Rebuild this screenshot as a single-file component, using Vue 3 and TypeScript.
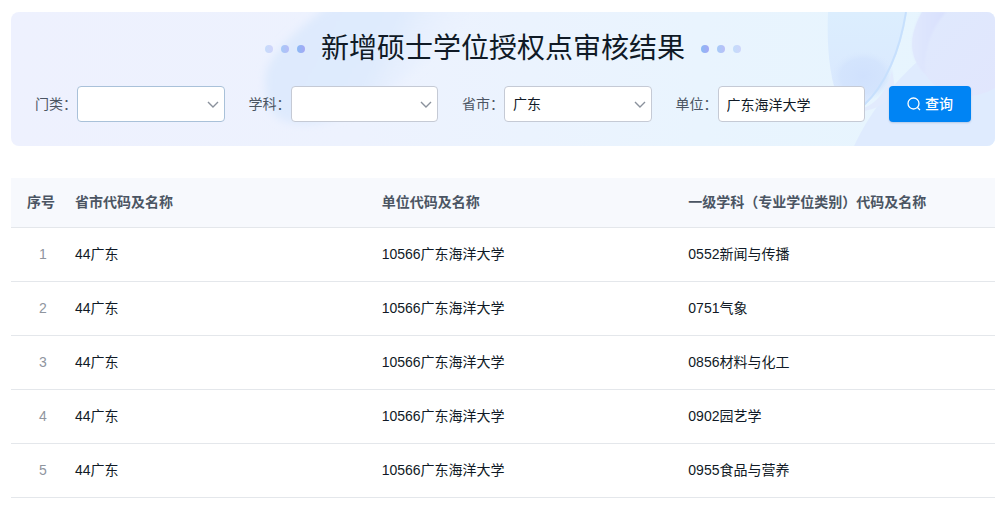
<script setup lang="ts">
import { ref } from 'vue'

interface ResultRow {
  region: string
  school: string
  subject: string
}

const category = ref('')
const discipline = ref('')
const province = ref('广东')
const school = ref('广东海洋大学')

const rows: ResultRow[] = [
  { region: '44广东', school: '10566广东海洋大学', subject: '0552新闻与传播' },
  { region: '44广东', school: '10566广东海洋大学', subject: '0751气象' },
  { region: '44广东', school: '10566广东海洋大学', subject: '0856材料与化工' },
  { region: '44广东', school: '10566广东海洋大学', subject: '0902园艺学' },
  { region: '44广东', school: '10566广东海洋大学', subject: '0955食品与营养' },
]
</script>

<template>
  <main class="page">
    <section class="panel">
      <svg class="backdrop" viewBox="0 0 984 134" preserveAspectRatio="none" aria-hidden="true">
        <defs>
          <linearGradient id="base" x1="0" y1="0" x2="1" y2="0">
            <stop offset="0" stop-color="#eef1fe" />
            <stop offset="0.35" stop-color="#edf2fe" />
            <stop offset="0.7" stop-color="#e9f4fe" />
            <stop offset="1" stop-color="#e6f5fe" />
          </linearGradient>
          <linearGradient id="glow" gradientUnits="userSpaceOnUse" x1="290" y1="30" x2="420" y2="100">
            <stop offset="0" stop-color="#deeafd" />
            <stop offset="0.5" stop-color="#dfebfd" />
            <stop offset="1" stop-color="#ecf2fe" stop-opacity="0" />
          </linearGradient>
          <linearGradient id="petal" x1="0" y1="0" x2="0" y2="1">
            <stop offset="0" stop-color="#dceefe" />
            <stop offset="1" stop-color="#d9e7fe" />
          </linearGradient>
          <linearGradient id="orb" x1="0" y1="0" x2="1" y2="1">
            <stop offset="0" stop-color="#dfe9fd" />
            <stop offset="1" stop-color="#e1e6fd" />
          </linearGradient>
          <linearGradient id="rim" x1="0" y1="0" x2="1" y2="0">
            <stop offset="0" stop-color="#e0e8fd" />
            <stop offset="1" stop-color="#d8dffd" />
          </linearGradient>
          <radialGradient id="spot">
            <stop offset="0" stop-color="#d0e1fd" />
            <stop offset="0.7" stop-color="#d2e3fd" stop-opacity="0.8" />
            <stop offset="1" stop-color="#d8e8fd" stop-opacity="0" />
          </radialGradient>
          <filter id="soft"><feGaussianBlur stdDeviation="4" /></filter>
          <filter id="edge"><feGaussianBlur stdDeviation="1" /></filter>
        </defs>
        <rect width="984" height="134" fill="url(#base)" />
        <path d="M325 -12 C290 14 254 44 254 66 C254 100 262 112 296 112 C352 108 420 50 480 -12Z" fill="url(#glow)" filter="url(#soft)" />
        <path d="M843 134 C861 96 884 70 906 50 L984 40 V134Z" fill="#dfebfe" />
        <path d="M817 0 H896 C890 38 876 74 853 94 C836 104 828 88 823 74 C817 52 816 24 817 0Z" fill="url(#petal)" />
        <ellipse cx="852" cy="64" rx="32" ry="25" fill="url(#spot)" />
        <path d="M895 0 C889 38 875 73 852 94" fill="none" stroke="#c7e0fd" stroke-width="2" />
        <path d="M853 96 C868 90 878 74 881 58 L884 76 C876 92 866 97 853 99Z" fill="#e2ebfd" />
        <path d="M911 0 C898 24 897 44 914 62 C932 90 964 88 984 76 V0Z" fill="url(#orb)" />
        <path d="M911 0 C898 24 897 44 914 62 C912 38 922 14 935 0Z" fill="url(#rim)" filter="url(#edge)" />
      </svg>

      <div class="heading">
        <span class="dots" aria-hidden="true"><i class="faint"></i><i class="mid"></i><i class="strong"></i></span>
        <h1>新增硕士学位授权点审核结果</h1>
        <span class="dots" aria-hidden="true"><i class="strong"></i><i class="mid"></i><i class="faint"></i></span>
      </div>

      <form class="filters" @submit.prevent>
        <div class="field">
          <label for="category">门类：</label>
          <div class="picker">
            <select id="category" v-model="category" class="control active">
              <option value=""></option>
            </select>
            <svg class="arrow" viewBox="0 0 12 8" aria-hidden="true"><path d="M1 1 L6 6 L11 1" /></svg>
          </div>
        </div>
        <div class="field">
          <label for="discipline">学科：</label>
          <div class="picker">
            <select id="discipline" v-model="discipline" class="control">
              <option value=""></option>
            </select>
            <svg class="arrow" viewBox="0 0 12 8" aria-hidden="true"><path d="M1 1 L6 6 L11 1" /></svg>
          </div>
        </div>
        <div class="field">
          <label for="province">省市：</label>
          <div class="picker">
            <select id="province" v-model="province" class="control">
              <option value="广东">广东</option>
            </select>
            <svg class="arrow" viewBox="0 0 12 8" aria-hidden="true"><path d="M1 1 L6 6 L11 1" /></svg>
          </div>
        </div>
        <div class="field">
          <label for="school">单位：</label>
          <input id="school" v-model="school" class="control" type="text" />
        </div>
        <button class="search" type="submit">
          <svg viewBox="0 0 14 14" aria-hidden="true"><circle cx="6.5" cy="6.5" r="5.5" /><path d="M10.5 10.5 L13 13" /></svg>
          <span>查询</span>
        </button>
      </form>
    </section>

    <table class="results">
      <thead>
        <tr>
          <th class="index" scope="col">序号</th>
          <th scope="col">省市代码及名称</th>
          <th scope="col">单位代码及名称</th>
          <th scope="col">一级学科（专业学位类别）代码及名称</th>
        </tr>
      </thead>
      <tbody>
        <tr v-for="(row, i) in rows" :key="row.subject">
          <td class="index">{{ i + 1 }}</td>
          <td>{{ row.region }}</td>
          <td>{{ row.school }}</td>
          <td>{{ row.subject }}</td>
        </tr>
      </tbody>
    </table>
  </main>
</template>

<style>
body {
  margin: 0;
  background: #fff;
}
</style>

<style scoped>
.page {
  box-sizing: border-box;
  padding: 12px 10px 12px 11px;
  font: 14px/20px "Liberation Sans", "Noto Sans CJK SC", sans-serif;
  color: #101a26;
}

.panel {
  position: relative;
  overflow: hidden;
  padding: 16px 24px 24px;
  border-radius: 8px;
}

.backdrop {
  position: absolute;
  inset: 0;
  width: 100%;
  height: 100%;
}

.heading {
  position: relative;
  display: flex;
  align-items: center;
  justify-content: center;
  gap: 16px;
}

h1 {
  margin: 0;
  font-size: 28px;
  line-height: 42px;
  font-weight: 400;
}

.dots {
  display: flex;
  gap: 8px;
}

.dots i {
  width: 8px;
  height: 8px;
  border-radius: 50%;
  background: linear-gradient(90deg, #8abaf5, #a6a8f5);
}

.dots .mid {
  opacity: 0.7;
}

.dots .faint {
  opacity: 0.4;
}

.filters {
  position: relative;
  display: flex;
  gap: 24px;
  margin-top: 16px;
}

.field {
  display: flex;
  flex: 1;
  align-items: center;
  min-width: 0;
}

label {
  flex: none;
  color: #4b5563;
}

.picker {
  position: relative;
  flex: 1;
  min-width: 0;
}

.control {
  display: block;
  box-sizing: border-box;
  flex: 1;
  width: 100%;
  min-width: 0;
  height: 36px;
  padding: 0 8px;
  border: 1px solid #c5cad5;
  border-radius: 4px;
  outline: none;
  background: #fff;
  color: inherit;
  font: inherit;
  appearance: none;
}

.control.active {
  border-color: #a9c1d9;
}

.arrow {
  position: absolute;
  top: 15px;
  right: 6px;
  width: 12px;
  height: 8px;
  fill: none;
  stroke: #8a919c;
  stroke-width: 1.4;
  pointer-events: none;
}

.search {
  display: flex;
  align-items: center;
  justify-content: center;
  gap: 4px;
  width: 82px;
  height: 36px;
  padding: 0;
  border: 0;
  border-radius: 4px;
  background: #0084f4;
  box-shadow: 0 1px 2px rgba(0, 60, 130, 0.2);
  color: #fff;
  font: inherit;
  font-weight: 500;
}

.search svg {
  width: 14px;
  height: 14px;
  fill: none;
  stroke: currentColor;
  stroke-width: 1.3;
}

.results {
  width: 100%;
  margin-top: 32px;
  border-collapse: separate;
  border-spacing: 0;
  table-layout: fixed;
}

th,
td {
  box-sizing: border-box;
  padding: 0 0 2px;
  border-bottom: 1px solid #e4e7eb;
  text-align: left;
}

th {
  height: 50px;
  background: #f7f9fd;
  color: #4b5563;
  font-weight: 700;
}

td {
  height: 54px;
}

.index {
  width: 64px;
}

th.index {
  padding-left: 16px;
}

td.index {
  color: #8f959e;
  text-align: center;
}
</style>
